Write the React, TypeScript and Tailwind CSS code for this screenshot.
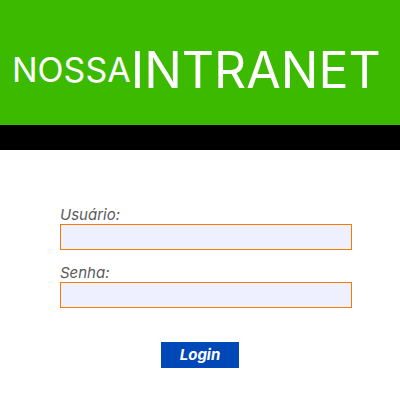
export default function App() {
  return (
    <div className="w-[400px] h-[400px] bg-white" style={{ fontFamily: "Inter, 'Liberation Sans', sans-serif" }}>
      <div className="h-[125px] bg-[#3cba00] flex items-center pl-[12px] pt-[14px]">
        <span className="text-white text-[34px] leading-none">NOSSA</span>
        <span className="text-white text-[50px] leading-none">INTRANET</span>
      </div>
      <div className="h-[25px] bg-black" />
      <div className="flex flex-col px-[60px] pt-[55px]">
        <label className="italic text-[15px] leading-[19px] text-[#5a5a5a]">Usuário:</label>
        <input className="h-[26px] w-[292px] bg-[#eef0ff] border border-[#f57c00] outline-none" />
        <label className="italic text-[15px] leading-[19px] text-[#5a5a5a] mt-[13px]">Senha:</label>
        <input type="password" className="h-[26px] w-[292px] bg-[#eef0ff] border border-[#f57c00] outline-none" />
        <div className="flex justify-center mt-[34px]">
          <button className="w-[78px] h-[26px] bg-[#0047b8] text-white italic font-bold text-[15px]">Login</button>
        </div>
      </div>
    </div>
  );
}
